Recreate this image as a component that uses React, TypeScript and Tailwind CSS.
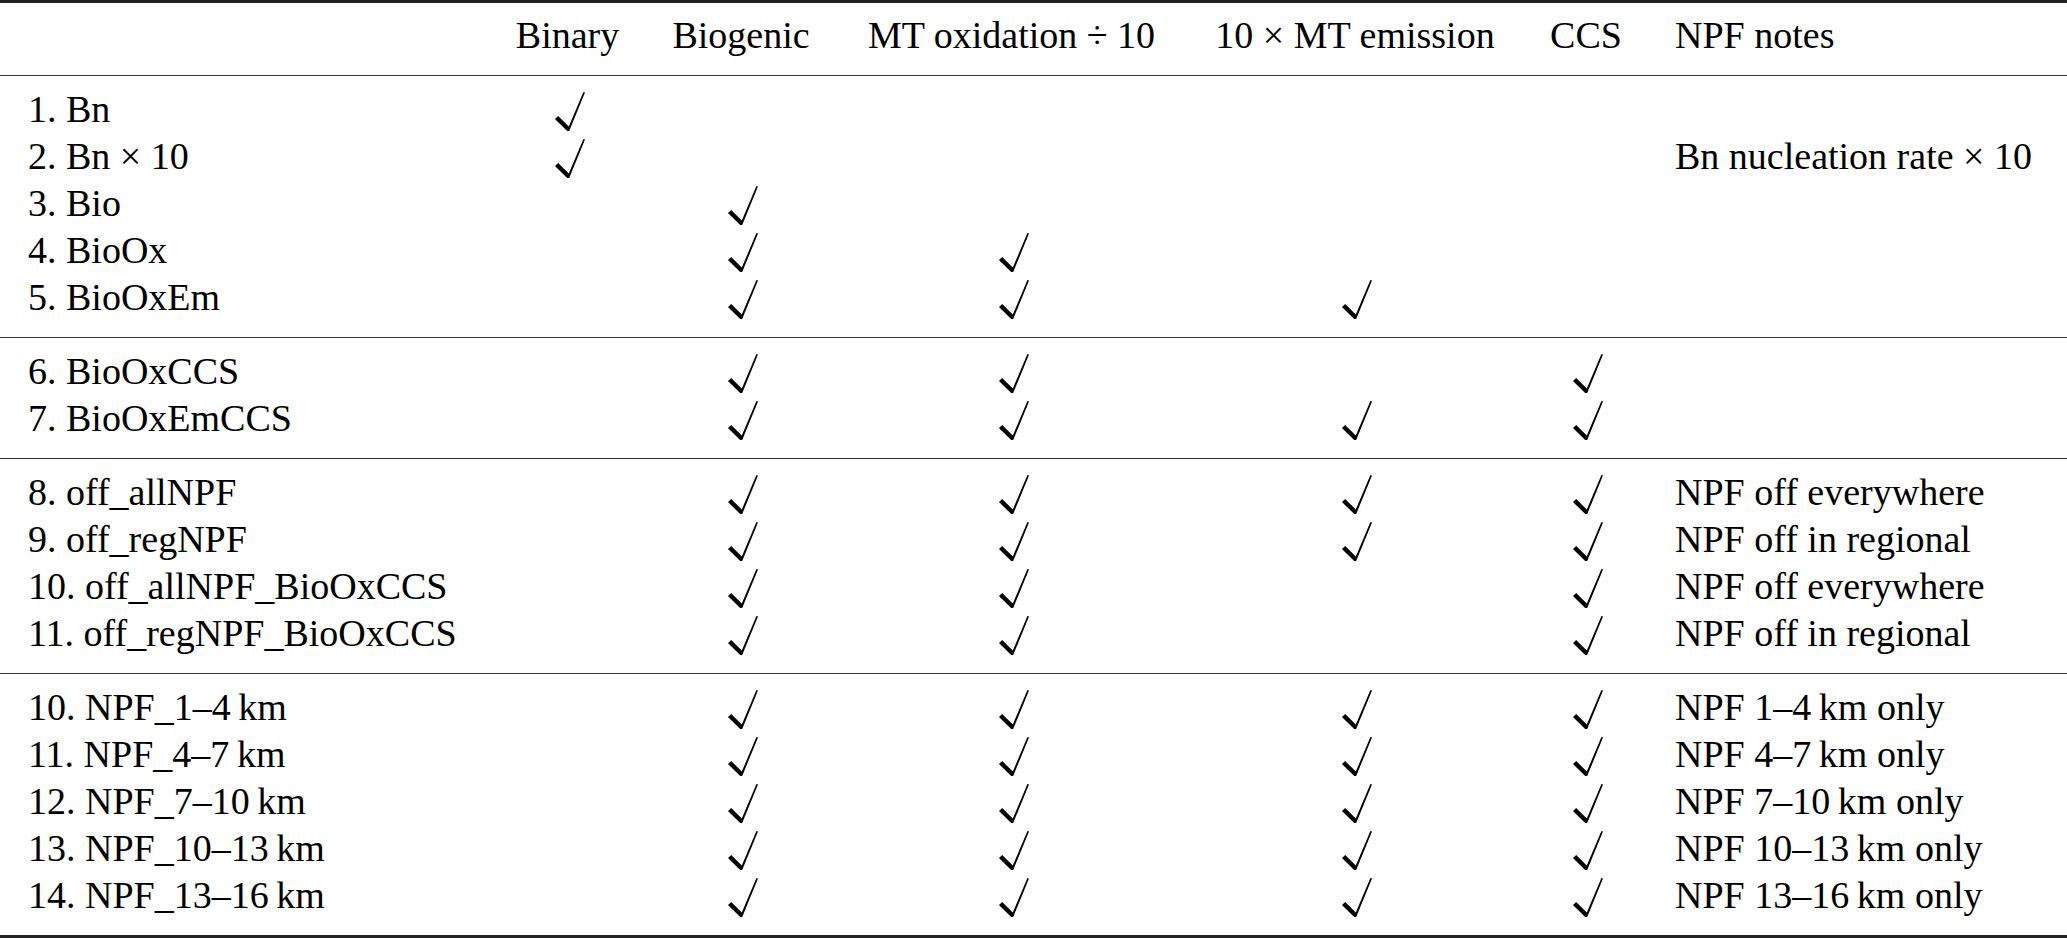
type Row = {
  label: string;
  checks: [boolean, boolean, boolean, boolean, boolean];
  note?: string;
};

const T = true;
const F = false;

// groups separated by rules, same as the source table
const groups: Row[][] = [
  [
    { label: '1. Bn', checks: [T, F, F, F, F] },
    { label: '2. Bn × 10', checks: [T, F, F, F, F], note: 'Bn nucleation rate × 10' },
    { label: '3. Bio', checks: [F, T, F, F, F] },
    { label: '4. BioOx', checks: [F, T, T, F, F] },
    { label: '5. BioOxEm', checks: [F, T, T, T, F] },
  ],
  [
    { label: '6. BioOxCCS', checks: [F, T, T, F, T] },
    { label: '7. BioOxEmCCS', checks: [F, T, T, T, T] },
  ],
  [
    { label: '8. off_allNPF', checks: [F, T, T, T, T], note: 'NPF off everywhere' },
    { label: '9. off_regNPF', checks: [F, T, T, T, T], note: 'NPF off in regional' },
    { label: '10. off_allNPF_BioOxCCS', checks: [F, T, T, F, T], note: 'NPF off everywhere' },
    { label: '11. off_regNPF_BioOxCCS', checks: [F, T, T, F, T], note: 'NPF off in regional' },
  ],
  [
    { label: '10. NPF_1–4\u2009km', checks: [F, T, T, T, T], note: 'NPF 1–4\u2009km only' },
    { label: '11. NPF_4–7\u2009km', checks: [F, T, T, T, T], note: 'NPF 4–7\u2009km only' },
    { label: '12. NPF_7–10\u2009km', checks: [F, T, T, T, T], note: 'NPF 7–10\u2009km only' },
    { label: '13. NPF_10–13\u2009km', checks: [F, T, T, T, T], note: 'NPF 10–13\u2009km only' },
    { label: '14. NPF_13–16\u2009km', checks: [F, T, T, T, T], note: 'NPF 13–16\u2009km only' },
  ],
];

const headers = ['Binary', 'Biogenic', 'MT oxidation ÷ 10', '10 × MT emission', 'CCS'];

const gridCols = 'grid grid-cols-[490px_155px_192px_349px_338px_124px_1fr]';

const Check = () => (
  <svg width="30" height="39" viewBox="0 0 30 39" className="mt-[6px] ml-[4px] block">
    <polygon
      points="0,27 3.2,24 13.8,34.6 28.4,0 30,0.6 14.2,39 12.2,39 1.2,28.2"
      fill="#000"
    />
  </svg>
);

const TableRow = ({ row }: { row: Row }) => (
  <div className={`${gridCols} h-[47.1px] leading-[47.1px]`}>
    <div className="pl-[28px] whitespace-nowrap">{row.label}</div>
    {row.checks.map((on, i) => (
      <div key={i} className="flex justify-center items-start">
        {on && <Check />}
      </div>
    ))}
    <div className="pl-[27px] whitespace-nowrap">{row.note}</div>
  </div>
);

export default function App() {
  return (
    <div className="w-[2067px] h-[938px] overflow-hidden bg-white text-black text-[38px] [font-family:'Liberation_Serif','Times_New_Roman',serif]">
      {/* top rule */}
      <div className="h-[2.5px] bg-[#222]" />

      <div className="pt-[9.4px] pb-[15.8px]">
        <div className={`${gridCols} h-[47.1px] leading-[47.1px]`}>
          <div />
          {headers.map((h) => (
            <div key={h} className="text-center whitespace-nowrap">
              {h}
            </div>
          ))}
          <div className="pl-[27px] whitespace-nowrap">NPF notes</div>
        </div>
      </div>

      {groups.map((group, gi) => (
        <div key={gi}>
          <div className="h-[1.5px] bg-[#333]" />
          <div className="pt-[9.4px] pb-[15.8px]">
            {group.map((row, ri) => (
              <TableRow key={ri} row={row} />
            ))}
          </div>
        </div>
      ))}

      {/* bottom rule */}
      <div className="h-[3px] bg-[#222]" />
    </div>
  );
}
